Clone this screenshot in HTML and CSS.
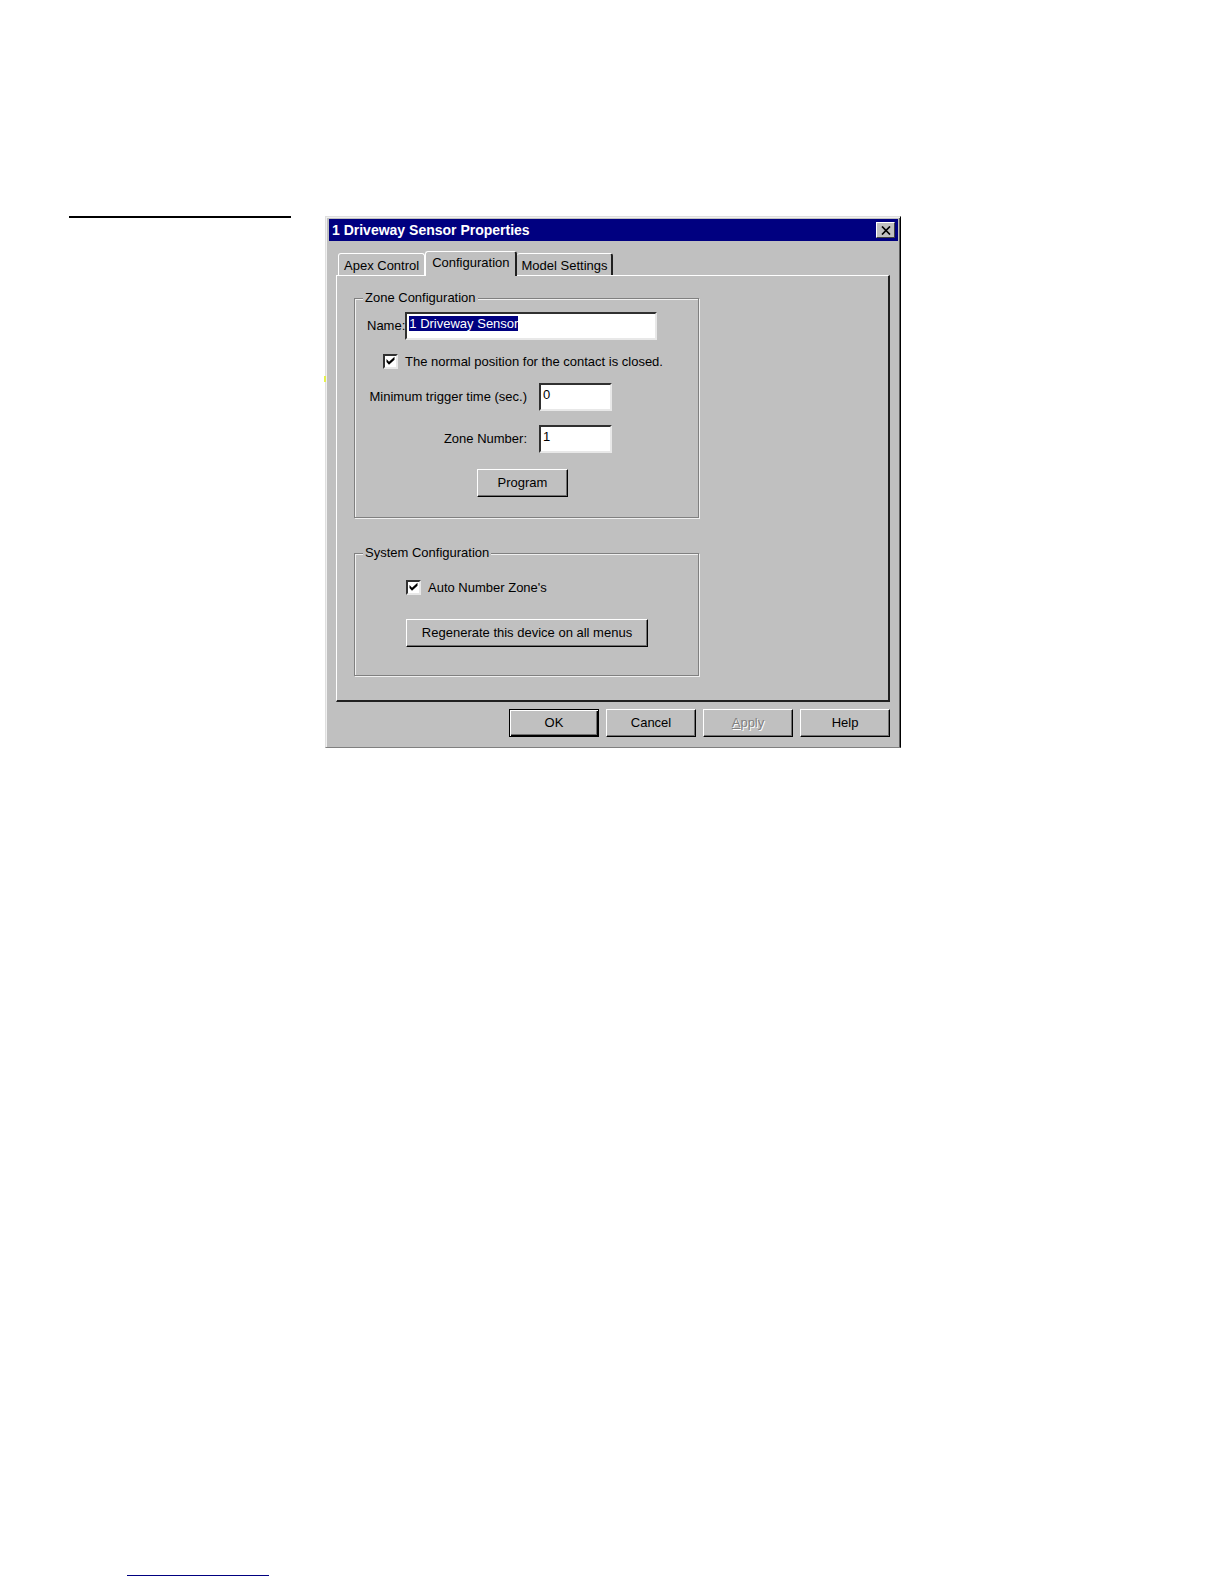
FILE: index.html
```html
<!DOCTYPE html>
<html lang="en">
<head>
  <meta charset="UTF-8">
  <meta name="viewport" content="width=device-width, initial-scale=1.0">
  <title>1 Driveway Sensor Properties</title>
  <link rel="stylesheet" href="styles.css">
</head>
<body>
  <main class="content">
    <hr class="side-rule">

    <section class="dialog">
      <span class="marker"></span>
      <header class="title-bar">
        <h1>1 Driveway Sensor Properties</h1>
        <button class="close" type="button" aria-label="Close">
          <svg width="10" height="9" viewBox="0 0 10 9"><path d="M1 0.5L9 8.5M9 0.5L1 8.5" stroke="#000" stroke-width="1.7"/></svg>
        </button>
      </header>

      <form class="dialog-body">
        <nav class="tabs">
          <button class="tab" type="button">Apex Control</button>
          <button class="tab active" type="button">Configuration</button>
          <button class="tab" type="button">Model Settings</button>
        </nav>

        <div class="panel">
          <fieldset class="group zone">
            <legend>Zone Configuration</legend>
            <div class="name-row">
              <label for="name">Name:</label>
              <input class="field" type="text" id="name" value="1 Driveway Sensor" spellcheck="false">
            </div>
            <label class="check"><input type="checkbox" checked>The normal position for the contact is closed.</label>
            <div class="number-row">
              <label for="trigger">Minimum trigger time (sec.)</label>
              <input class="field" type="text" id="trigger" value="0">
            </div>
            <div class="number-row">
              <label for="zone">Zone Number:</label>
              <input class="field" type="text" id="zone" value="1">
            </div>
            <button class="btn program" type="button">Program</button>
          </fieldset>

          <fieldset class="group system">
            <legend>System Configuration</legend>
            <label class="check"><input type="checkbox" checked>Auto Number Zone's</label>
            <button class="btn wide" type="button">Regenerate this device on all menus</button>
          </fieldset>
        </div>

        <div class="actions">
          <button class="btn default" type="button">OK</button>
          <button class="btn" type="button">Cancel</button>
          <button class="btn" type="button" disabled><u>A</u>pply</button>
          <button class="btn" type="button">Help</button>
        </div>
      </form>
    </section>
  </main>

  <footer class="footer">
    <hr class="footer-rule">
  </footer>

  <script>
    window.onload = function () {
      document.getElementById('name').select();
    };
  </script>
</body>
</html>
```

FILE: styles.css
```css
* {
  box-sizing: border-box;
}
body {
  margin: 0;
  min-height: 100vh;
  display: flex;
  flex-direction: column;
  justify-content: space-between;
  background: #fff;
  color: #000;
  font: 13px/16px "Liberation Sans", Arial, sans-serif;
}
hr {
  margin: 0;
  border: 0;
}
.content {
  display: grid;
  grid-template-columns: 222px minmax(0, 576px);
  gap: 34px;
  align-items: start;
  padding: 216px 24px 40px 69px;
}
.side-rule {
  height: 2px;
  background: #000;
}

/* window */
.dialog {
  position: relative;
  padding: 2px 2px 10px 3px;
  background: #c0c0c0;
  border: 1px solid #dfdfdf;
  border-right: 1px solid #000;
  border-bottom: 1px solid #808080;
  box-shadow: inset 1px 1px #f0f0f0, inset -1px 0 #606060;
}
.marker {
  position: absolute;
  left: -2px;
  top: 159px;
  width: 2px;
  height: 6px;
  background: #e4f04c;
}
.title-bar {
  display: flex;
  align-items: center;
  justify-content: space-between;
  height: 22px;
  padding: 0 3px;
  background: #000080;
}
.title-bar h1 {
  margin: 0;
  color: #fff;
  font-size: 14px;
}
.close {
  display: flex;
  align-items: center;
  justify-content: center;
  width: 19px;
  height: 16px;
  padding: 0;
  background: #c0c0c0;
  border: 1px solid;
  border-color: #fff #404040 #404040 #fff;
}
.dialog-body {
  padding: 10px 8px 0 7px;
}

/* tabs */
.tabs {
  display: flex;
  align-items: flex-end;
  padding-left: 2px;
}
.tab {
  height: 22px;
  padding: 2px 5px 0;
  background: #c0c0c0;
  border: 1px solid #fff;
  border-bottom: 0;
  border-radius: 3px 3px 0 0;
  color: #000;
  font: inherit;
  white-space: nowrap;
}
.tab:last-child {
  padding: 2px 4px 0;
  border-left: 0;
  border-right: 2px solid #202020;
}
.tab.active {
  position: relative;
  height: 25px;
  margin-bottom: -1px;
  padding: 0 6px 2px;
  border-right: 2px solid #202020;
}
.panel {
  padding: 14px 17px 24px;
  border: 1px solid #fff;
  border-right: 2px solid #202020;
  border-bottom: 2px solid #202020;
}

/* group boxes */
.group {
  display: flex;
  flex-direction: column;
  align-items: flex-start;
  max-width: 345px;
  min-width: 0;
  margin: 0;
  border: 1px solid #808080;
  box-shadow: 1px 1px #f0f0f0, inset 1px 1px #f0f0f0;
}
.group legend {
  padding: 0 2px;
  background: #c0c0c0;
}
.zone {
  gap: 14px;
  padding: 6px 41px 20px 12px;
}
.zone legend {
  margin-left: -4px;
}
.zone .check {
  padding-left: 16px;
}
.system {
  gap: 24px;
  margin-top: 27px;
  padding: 19px 41px 28px 51px;
}
.system legend {
  margin-left: -43px;
}
.name-row {
  display: flex;
  align-items: center;
  width: 100%;
}
.name-row .field {
  flex: 1;
  min-width: 0;
}
.number-row {
  display: grid;
  grid-template-columns: 160px 73px;
  gap: 12px;
  align-items: center;
}
.number-row label {
  text-align: right;
}
.field {
  width: 100%;
  height: 28px;
  padding: 1px 2px 7px;
  background: #fff;
  border: 2px solid;
  border-color: #303030 #e8e8e8 #e8e8e8 #303030;
  color: #000;
  font: inherit;
  outline: 0;
}
.field::selection {
  background: #000080;
  color: #fff;
}
.check {
  display: flex;
  align-items: center;
  gap: 7px;
  height: 15px;
  white-space: nowrap;
}
.check input {
  appearance: none;
  width: 15px;
  height: 15px;
  margin: 0;
  background: #fff;
  border: 2px solid;
  border-color: #303030 #e8e8e8 #e8e8e8 #303030;
}
.check input:checked {
  background: #fff url("data:image/svg+xml,%3Csvg xmlns='http://www.w3.org/2000/svg' viewBox='0 0 11 11'%3E%3Cpath d='M1.5 3V6L4 8.8L9.5 3.8V0.8L4 5.8Z'/%3E%3C/svg%3E") center / 11px 11px no-repeat;
}

/* push buttons */
.btn {
  width: 91px;
  height: 28px;
  padding: 0;
  background: #c0c0c0;
  border: 1px solid;
  border-color: #fff #000 #000 #fff;
  box-shadow: inset -1px -1px #707070;
  color: #000;
  font: inherit;
}
.btn:disabled {
  color: #808080;
  text-shadow: 1px 1px #fff;
}
.btn.default {
  border: 1px solid #000;
  box-shadow: inset 1px 1px #fff, inset -1px -1px #000, inset -2px -2px #707070;
}
.btn.program {
  margin: 2px 0 0 110px;
}
.btn.wide {
  width: 242px;
}
.actions {
  display: flex;
  justify-content: flex-end;
  gap: 7px;
  padding-top: 7px;
}
.actions .btn {
  width: 90px;
}

.footer {
  padding: 0 127px 8px;
}
.footer-rule {
  width: 142px;
  height: 1px;
  background: #000080;
}
```
